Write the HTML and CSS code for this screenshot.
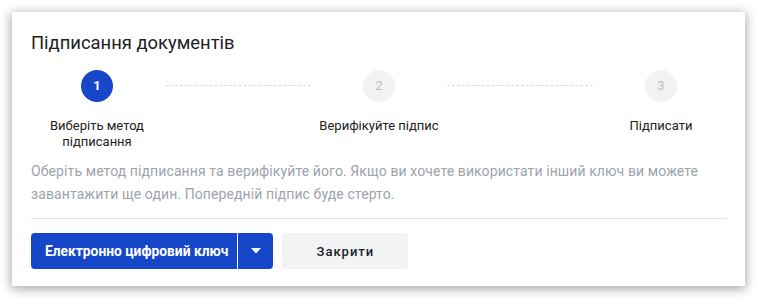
FILE: index.html
```html
<!DOCTYPE html>
<html lang="uk">
<head>
  <meta charset="UTF-8" />
  <title>Підписання документів</title>
  <link rel="stylesheet" href="styles.css">
</head>
<body>
  <div class="dialog">
    <h2 class="dialog-title">Підписання документів</h2>

    <div class="stepper">
      <div class="step active">
        <span class="step-num">1</span>
        <span class="step-label">Виберіть метод підписання</span>
      </div>
      <div class="step-line"></div>
      <div class="step">
        <span class="step-num">2</span>
        <span class="step-label">Верифікуйте підпис</span>
      </div>
      <div class="step-line"></div>
      <div class="step">
        <span class="step-num">3</span>
        <span class="step-label">Підписати</span>
      </div>
    </div>

    <p class="hint">Оберіть метод підписання та верифікуйте його. Якщо ви хочете використати інший ключ ви можете завантажити ще один. Попередній підпис буде стерто.</p>

    <div class="actions">
      <div class="split-btn">
        <button class="btn-primary">Електронно цифровий ключ</button>
        <button class="btn-caret" aria-label="Інші методи">
          <svg width="10" height="6" viewBox="0 0 10 6"><path d="M0 0h10L5 5.5z" fill="#fff"/></svg>
        </button>
      </div>
      <button class="btn-secondary">Закрити</button>
    </div>
  </div>
</body>
</html>
```

FILE: styles.css
```css
html, body {
  background: #fff;
}
body {
  margin: 0;
  padding: 12px;
  font-family: Roboto, "Noto Sans", sans-serif;
  color: #222;
}
.dialog {
  width: 733px;
  height: 274px;
  box-sizing: border-box;
  padding: 19px 18px 0 19px;
  background: #fff;
  box-shadow: 0 2px 10px 1px rgba(0, 0, 0, 0.35);
}
.dialog-title {
  margin: 0;
  font-size: 18.4px;
  font-weight: 400;
  line-height: 24px;
  color: #212121;
}

/* кроки */
.stepper {
  display: flex;
  align-items: flex-start;
  margin-top: 15px;
}
.step {
  width: 132px;
  display: flex;
  flex-direction: column;
  align-items: center;
  text-align: center;
}
.step-num {
  width: 32px;
  height: 32px;
  border-radius: 50%;
  background: #f1f2f4;
  color: #b9bcc2;
  font-size: 13px;
  line-height: 32px;
}
.step.active .step-num {
  background: #1747c9;
  color: #fff;
  font-weight: 700;
}
.step-label {
  margin-top: 16px;
  font-size: 13px;
  line-height: 16px;
  color: #222;
}
.step-line {
  flex: 1;
  margin: 15px 2px 0;
  border-top: 1px dashed #d9dbe0;
}

.hint {
  margin: 10px 0 0;
  font-size: 14px;
  letter-spacing: 0.1px;
  line-height: 23px;
  color: #9ea3ab;
  padding-bottom: 12px;
  border-bottom: 1px solid #e2e4e8;
}

.actions {
  display: flex;
  gap: 9px;
  margin-top: 14px;
}
.split-btn {
  display: flex;
  border-radius: 4px;
  overflow: hidden;
}
button {
  cursor: pointer;
  border: none;
  height: 36px;
  font-family: inherit;
}
.btn-primary {
  padding: 0 9px 0 14px;
  background: #1747c9;
  color: #fff;
  font-size: 13.8px;
  font-weight: 700;
  border-right: 1px solid #fff;
}
.btn-caret {
  width: 35px;
  background: #1747c9;
  display: flex;
  align-items: center;
  justify-content: center;
}
.btn-secondary {
  width: 126px;
  border-radius: 4px;
  background: #f2f3f5;
  color: #1c1f2a;
  font-size: 13px;
  font-weight: 500;
  letter-spacing: 1px;
}
```
